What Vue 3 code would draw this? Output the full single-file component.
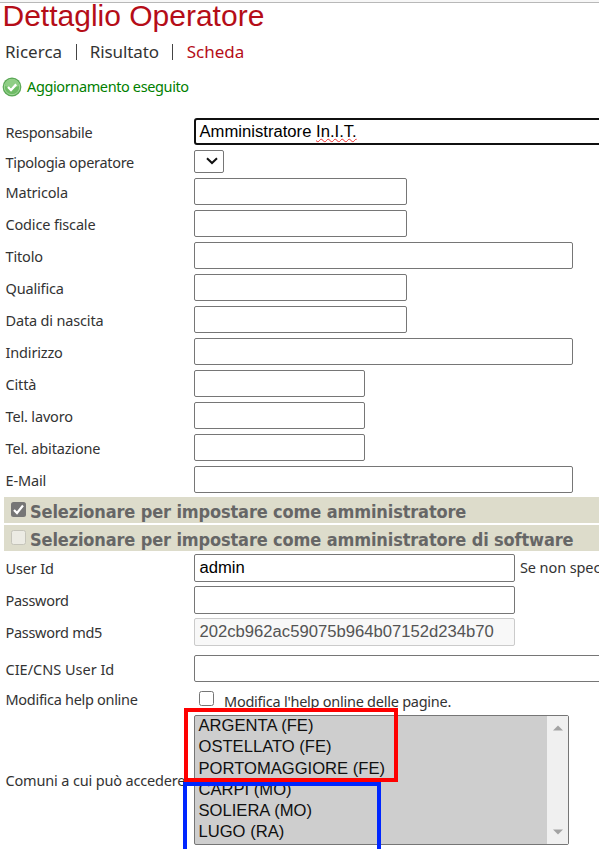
<script setup>
const fields = [
  { label: 'Matricola', size: 'medium' },
  { label: 'Codice fiscale', size: 'medium' },
  { label: 'Titolo', size: 'large' },
  { label: 'Qualifica', size: 'medium' },
  { label: 'Data di nascita', size: 'medium' },
  { label: 'Indirizzo', size: 'large' },
  { label: 'Città', size: 'small' },
  { label: 'Tel. lavoro', size: 'small' },
  { label: 'Tel. abitazione', size: 'small' },
  { label: 'E-Mail', size: 'large' },
]
const comuni = ['ARGENTA (FE)', 'OSTELLATO (FE)', 'PORTOMAGGIORE (FE)', 'CARPI (MO)', 'SOLIERA (MO)', 'LUGO (RA)']
</script>

<template>
  <main class="page">
    <div class="topline"></div>
    <h1>Dettaglio Operatore</h1>
    <nav>
      <span>Ricerca</span><i></i><span class="results">Risultato</span><i></i><span class="current">Scheda</span>
    </nav>
    <div class="status">
      <svg width="20" height="20" viewBox="0 0 20 20">
        <circle cx="10" cy="10" r="9.4" fill="#5aa855" />
        <circle cx="10" cy="10" r="7.7" fill="#6dbb64" stroke="#a5d89d" stroke-width="1" />
        <path d="M3 9a7 7 0 0 1 14 0q-7 3-14 0" fill="#8fce85" />
        <path d="M6 10l3 3 5.2-5.6" fill="none" stroke="#fff" stroke-width="2.3" />
      </svg>
      <span>Aggiornamento eseguito</span>
    </div>

    <div class="row">
      <label class="tight">Responsabile</label>
      <div class="field focused">Amministratore <span class="typo">In.I.T.</span></div>
    </div>
    <div class="row short">
      <label class="tight">Tipologia operatore</label>
      <div class="select">
        <svg width="12" height="8" viewBox="0 0 12 8"><path d="M1 1.2l5 4.8 5-4.8" fill="none" stroke="#111" stroke-width="2" /></svg>
      </div>
    </div>
    <div v-for="f in fields" :key="f.label" class="row">
      <label>{{ f.label }}</label>
      <div class="field" :class="f.size"></div>
    </div>

    <div class="band first">
      <svg width="15" height="15" viewBox="0 0 15 15"><rect width="15" height="15" rx="2.5" fill="#767676" /><path d="M3 8l3 3 6-7.5" fill="none" stroke="#fff" stroke-width="2.2" /></svg>
      <span>Selezionare per impostare come amministratore</span>
    </div>
    <div class="band">
      <b class="box disabled"></b>
      <span>Selezionare per impostare come amministratore di software</span>
    </div>

    <div class="row lower account">
      <label>User Id</label>
      <div class="field tall">admin</div>
      <span class="hint">Se non spec</span>
    </div>
    <div class="row lower">
      <label class="tight">Password</label>
      <div class="field tall"></div>
    </div>
    <div class="row lower">
      <label class="tight">Password md5</label>
      <div class="field tall readonly">202cb962ac59075b964b07152d234b70</div>
    </div>
    <div class="row cie">
      <label class="loose">CIE/CNS User Id</label>
      <div class="field wide"></div>
    </div>
    <div class="row help">
      <label class="tight">Modifica help online</label>
      <b class="box"></b>
      <span class="note">Modifica l'help online delle pagine.</span>
    </div>
    <div class="row lower towns">
      <label>Comuni a cui può accedere</label>
      <div class="list">
        <div class="options"><div v-for="c in comuni" :key="c">{{ c }}</div></div>
        <div class="scroll">
          <svg width="10" height="6" viewBox="0 0 10 6"><path d="M0 5.5L5 .5l5 5z" fill="#a3a3a3" /></svg>
          <svg width="10" height="6" viewBox="0 0 10 6"><path d="M0 .5l5 5 5-5z" fill="#a3a3a3" /></svg>
        </div>
      </div>
    </div>
    <div class="mark red"></div>
    <div class="mark blue"></div>
  </main>
</template>

<style>
body { background: #fff; overflow: hidden; }
</style>

<style scoped>
* { box-sizing: border-box; }
.page { position: relative; width: 599px; height: 849px; overflow: hidden; font: 14.5px/20px "Noto Sans", sans-serif; color: #333; white-space: nowrap; }
.topline { height: 3px; background: #f7f7f7; border-bottom: 1px solid #b8b8b8; }
h1 { margin: 0 0 0 2.5px; height: 33px; font: 400 30px/26px "Liberation Sans", sans-serif; letter-spacing: 0; color: #b50d18; }
nav { display: flex; align-items: center; height: 30px; padding: 2px 0 0 5px; font-size: 17px; }
nav i { width: 1px; height: 16px; margin: 0 13.2px 0 13.5px; background: #444; }
.results { letter-spacing: -.1px; }
.current { color: #b50d18; }
.status { display: flex; align-items: center; gap: 5px; height: 49px; padding: 0 0 7px 2px; color: #008000; letter-spacing: -.38px; }
.status span { margin-top: -2px; }
.row { display: flex; align-items: center; height: 32px; }
.row label { width: 194px; padding: 1.5px 0 0 5.5px; flex: none; letter-spacing: -.16px; }
.row.lower label { padding: 0 0 1px 5.5px; }
.row label.tight { letter-spacing: -.3px; }
.row label.loose { letter-spacing: 0; }
.short { height: 28px; }
.field { flex: none; height: 27px; width: 500px; border: 1px solid #767676; border-radius: 2px; background: #fff; padding-left: 4.5px; font: 16.65px/26px "Liberation Sans", sans-serif; color: #000; }
.focused { border: 2px solid #101010; padding-left: 3.5px; line-height: 23px; border-radius: 3px; }
.typo { text-decoration: underline wavy #f03030 1px; text-underline-offset: 1px; }
.small { width: 171px; }
.medium { width: 213px; }
.large { width: 379px; }
.tall { width: 321px; height: 28px; }
.readonly { background: #f8f8f8; border-color: #cbcbcb; color: #545454; }
.select { width: 30px; height: 23px; border: 1px solid #767676; border-radius: 2px; display: flex; align-items: center; justify-content: flex-end; padding-right: 5px; }
.band { display: flex; align-items: center; height: 26px; margin: 0 0 2px 4px; padding-left: 7px; background: #dddccb; color: #666; font: bold condensed 18px/26px "DejaVu Sans", "DejaVu Sans Condensed", sans-serif; letter-spacing: -.135px; }
.band.first { margin-top: 2px; }
.band span { margin-left: 4px; padding-top: 3px; }
.box { flex: none; width: 15px; height: 15px; border: 1px solid #767676; border-radius: 2.5px; background: #fff; }
.disabled { border-color: #c5c4ba; background: #ecebe4; }
.band svg, .band .box { margin-bottom: 1px; }
.account { margin-top: -1px; }
.hint { margin-left: 5px; letter-spacing: -.1px; margin-top: -3px; }
.cie { height: 33px; margin-top: 4px; }
.help { height: 29px; }
.row.help label { padding: 0 0 1px 5.5px; }
.help .box { margin: 0 0 3px 5px; }
.note { margin: 3px 0 0 10px; letter-spacing: -.25px; }
.towns { height: 130px; margin-top: 1px; }
.list { display: flex; width: 375px; height: 130px; border: 1px solid #767676; border-radius: 2px; background: #cecece; font: 16.6px/21.3px "Liberation Sans", sans-serif; color: #101010; }
.options { flex: 1; padding-left: 3.5px; margin-top: -1px; }
.scroll { width: 21px; background: #f0f0f0; display: flex; flex-direction: column; align-items: center; justify-content: space-between; padding: 9px 0; }
.mark { position: absolute; border: 4px solid; }
.red { left: 184px; top: 708px; width: 214px; height: 74px; border-color: #fe0000; }
.blue { left: 183px; top: 782px; width: 198px; height: 80px; border-color: #0026ff; }
</style>
